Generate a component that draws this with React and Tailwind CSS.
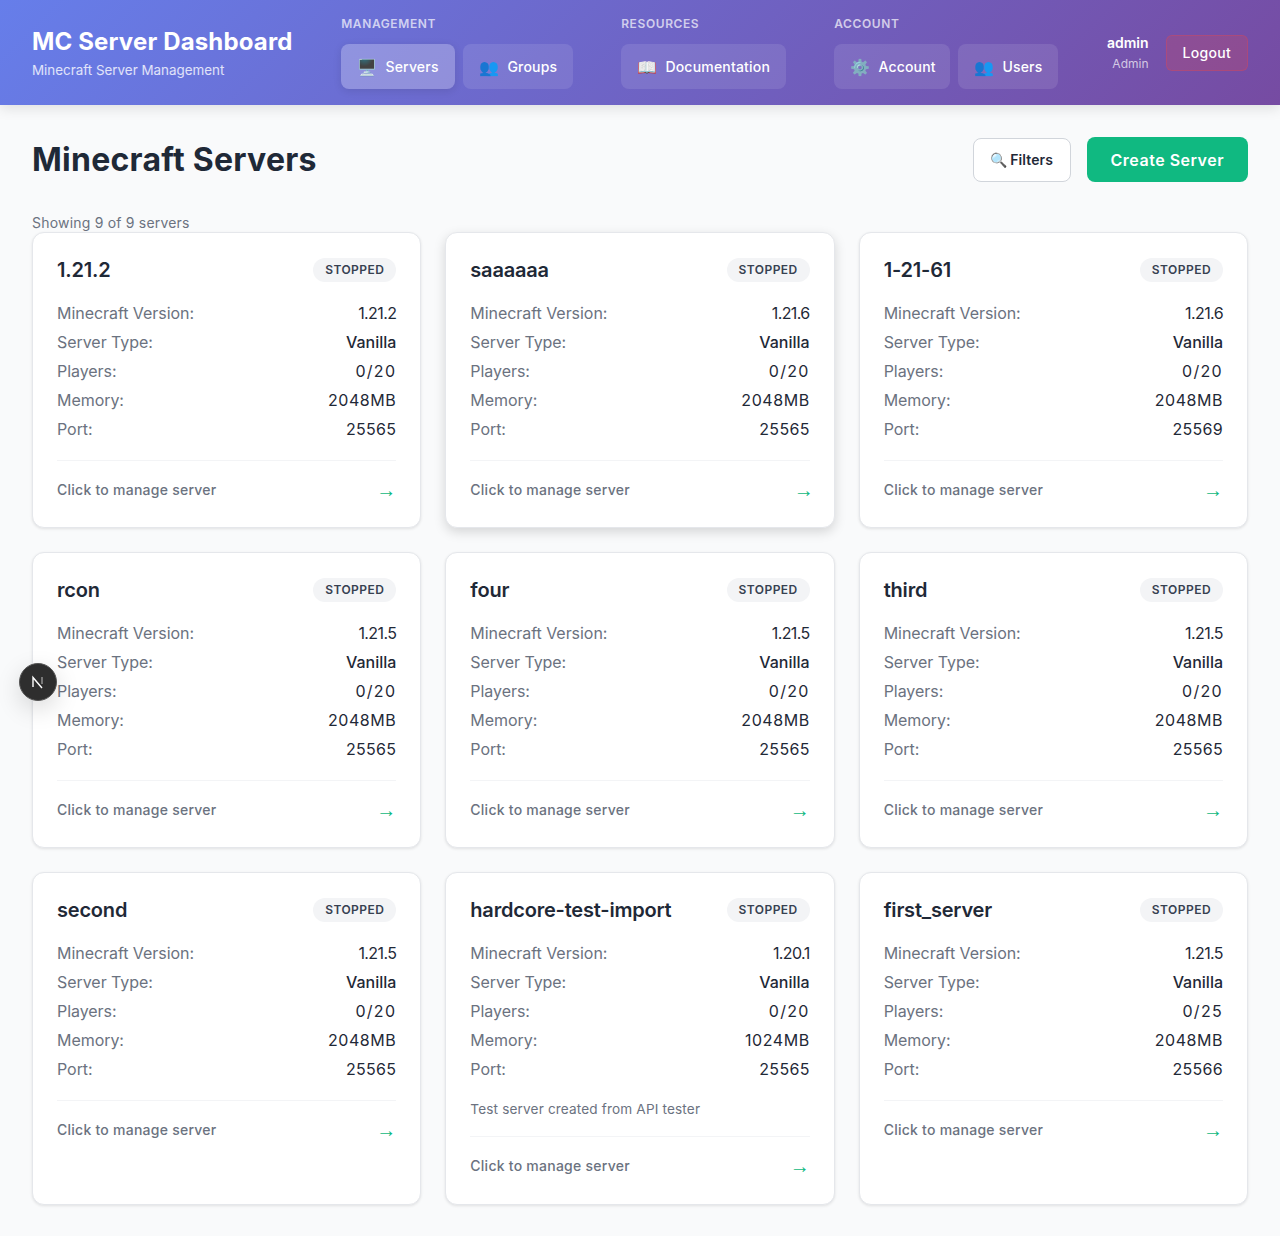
const servers = [
  { name: "1.21.2", version: "1.21.2", players: "0/20", memory: "2048MB", port: "25565" },
  { name: "saaaaaa", version: "1.21.6", players: "0/20", memory: "2048MB", port: "25565", hover: true },
  { name: "1-21-61", version: "1.21.6", players: "0/20", memory: "2048MB", port: "25569" },
  { name: "rcon", version: "1.21.5", players: "0/20", memory: "2048MB", port: "25565" },
  { name: "four", version: "1.21.5", players: "0/20", memory: "2048MB", port: "25565" },
  { name: "third", version: "1.21.5", players: "0/20", memory: "2048MB", port: "25565" },
  { name: "second", version: "1.21.5", players: "0/20", memory: "2048MB", port: "25565" },
  { name: "hardcore-test-import", version: "1.20.1", players: "0/20", memory: "1024MB", port: "25565", description: "Test server created from API tester" },
  { name: "first_server", version: "1.21.5", players: "0/25", memory: "2048MB", port: "25566" },
];

const navGroups = [
  { label: "MANAGEMENT", items: [{ icon: "🖥️", text: "Servers", width: "w-[114px]", active: true }, { icon: "👥", text: "Groups", width: "w-[110px]" }] },
  { label: "RESOURCES", items: [{ icon: "📖", text: "Documentation", width: "w-[165px]" }] },
  { label: "ACCOUNT", items: [{ icon: "⚙️", text: "Account", width: "w-[116px]" }, { icon: "👥", text: "Users", width: "w-[100px]" }] },
];

function NavButton({ icon, text, width, active }) {
  return (
    <a className={`flex h-[45px] items-center gap-2 rounded-lg pl-4 text-sm font-medium tracking-[0.2px] whitespace-nowrap text-white ${width} ${active ? "bg-white/25 shadow-[0_2px_8px_rgba(0,0,0,0.1)]" : "bg-white/10"}`}>
      <span className="text-base">{icon}</span>
      <span>{text}</span>
    </a>
  );
}

function Row({ label, value, strong, spacing }) {
  return (
    <div className="flex h-[29px] items-center justify-between text-base">
      <span className="tracking-[-0.05px] text-[#6b7280]">{label}</span>
      <span className={`text-[#1f2937] ${strong ? "font-medium" : ""} ${spacing || ""}`}>{value}</span>
    </div>
  );
}

function ServerCard({ server }) {
  return (
    <div className={`flex flex-col rounded-xl border border-[#e5e7eb] bg-white px-6 pt-[25px] ${server.description ? "pb-[28px]" : "pb-[27px]"} ${server.hover ? "shadow-[0_4px_12px_rgba(0,0,0,0.15)]" : "shadow-[0_1px_3px_rgba(0,0,0,0.1)]"}`}>
      <div className="mb-[14px] flex h-[24px] items-center justify-between">
        <h3 className="text-xl font-semibold tracking-[-0.2px] text-[#1f2937]">{server.name}</h3>
        <span className="rounded-full bg-[#f3f4f6] px-3 py-1 text-xs font-semibold tracking-[0.45px] text-[#374151]">STOPPED</span>
      </div>
      <div className="flex flex-col pt-[2px]">
        <Row label="Minecraft Version:" value={server.version} spacing="tracking-[-0.6px]" />
        <Row label="Server Type:" value="Vanilla" strong />
        <Row label="Players:" value={server.players} spacing="tracking-[1.3px]" />
        <Row label="Memory:" value={server.memory} spacing="tracking-[0.55px]" />
        <Row label="Port:" value={server.port} spacing="tracking-[0.3px]" />
      </div>
      {server.description && (
        <p className="mt-[16px] text-[13.6px] leading-[21px] tracking-[0.15px] text-[#6b7280]">{server.description}</p>
      )}
      <div className={`${server.description ? "mt-[16px]" : "mt-[17px]"} flex items-start justify-between border-t border-[#f3f4f6] pt-[19px]`}>
        <span className="text-sm font-medium tracking-[0.25px] text-[#6b7280]">Click to manage server</span>
        <span className={`font-['Liberation_Sans',sans-serif] text-[20px] leading-[20px] text-[#10b981] ${server.hover ? "translate-x-[4px]" : ""}`}>→</span>
      </div>
    </div>
  );
}

export default function App() {
  return (
    <div className="relative min-h-screen bg-[#f9fafb] font-['Inter',sans-serif]">
      <header className="flex h-[105px] items-center justify-between bg-[linear-gradient(135deg,#667eea_0%,#764ba2_100%)] px-8 shadow-[0_4px_12px_rgba(0,0,0,0.1)]">
        <div>
          <h1 className="text-2xl font-bold leading-[32px] tracking-[0.15px] text-white">MC Server Dashboard</h1>
          <p className="mt-[2px] text-[13.4px] leading-[20px] text-white/80">Minecraft Server Management</p>
        </div>
        <nav className="flex gap-12">
          {navGroups.map((group) => (
            <div key={group.label} className="flex flex-col gap-3">
              <div className="text-xs font-semibold tracking-[0.6px] text-white/70">{group.label}</div>
              <div className="flex gap-2">
                {group.items.map((item) => (
                  <NavButton key={item.text} {...item} />
                ))}
              </div>
            </div>
          ))}
        </nav>
        <div className="flex items-center gap-[17px]">
          <div className="flex flex-col items-end pb-[1px]">
            <span className="text-sm font-semibold text-white">admin</span>
            <span className="mt-[3px] text-xs text-white/70">Admin</span>
          </div>
          <button className="h-[36px] rounded-md border border-[#ef4444]/30 bg-[#ef4444]/20 px-4 text-sm font-medium tracking-[0.3px] text-white">Logout</button>
        </div>
      </header>

      <main className="px-8 pt-8 pb-8">
        <div className="flex items-center justify-between">
          <h2 className="text-[32px] leading-[45px] font-bold tracking-[0.25px] text-[#1f2937]">Minecraft Servers</h2>
          <div className="flex items-center gap-4">
            <button className="flex h-[44px] w-[98px] items-center justify-center gap-[3px] rounded-lg border border-[#d1d5db] bg-white text-sm font-semibold tracking-[0.1px] text-[#1f2937]">
              <span>🔍</span>
              <span>Filters</span>
            </button>
            <button className="h-[45px] rounded-lg bg-[#10b981] px-6 text-base font-semibold tracking-[0.5px] text-white">Create Server</button>
          </div>
        </div>
        <p className="mt-[32px] h-[18px] text-sm leading-[18px] tracking-[0.2px] text-[#6b7280]">Showing 9 of 9 servers</p>
        <div className="grid grid-cols-3 gap-6">
          {servers.map((server) => (
            <ServerCard key={server.name} server={server} />
          ))}
        </div>
      </main>

      {/* next dev indicator */}
      <div className="absolute top-[663px] left-[19px] flex h-[38px] w-[38px] items-center justify-center rounded-full border border-[#555] bg-[#2e2e2e] shadow-[0_8px_24px_rgba(0,0,0,0.15)]">
        <svg width="14" height="14" viewBox="0 0 14 14" fill="none" stroke="white" strokeWidth="1.4">
          <path d="M2 12V2.5L11 13" />
          <path d="M11 2v7" stroke="#999" />
        </svg>
      </div>
    </div>
  );
}
